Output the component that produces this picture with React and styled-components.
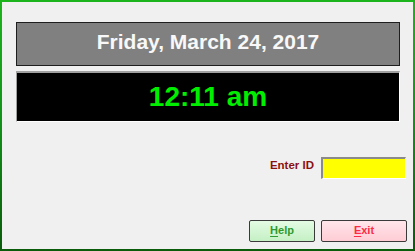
import React from "react";
import styled, { createGlobalStyle } from "styled-components";

const Global = createGlobalStyle`
  html, body {
    margin: 0;
    padding: 0;
    background: #f0f0f0;
  }
  * {
    box-sizing: border-box;
  }
`;

const Frame = styled.div`
  width: 415px;
  height: 251px;
  display: flex;
  flex-direction: column;
  background: #f0f0f0;
  border: 2px solid;
  border-image: linear-gradient(to bottom, #1cb41c, #12901a 50%, #0a5c0a) 1;
  font-family: "Liberation Sans", Arial, sans-serif;
`;

const Clock = styled.div`
  display: flex;
  flex-direction: column;
  gap: 5px;
  padding: 20px 13px 0 14px;
`;

const DatePanel = styled.div`
  height: 44px;
  display: flex;
  align-items: center;
  justify-content: center;
  padding-bottom: 4px;
  background: #808080;
  border: 1px solid #1e1e1e;
  color: #f8f8f8;
  font-weight: bold;
  font-size: 21px;
`;

const TimePanel = styled.div`
  height: 51px;
  display: flex;
  align-items: center;
  justify-content: center;
  background: #000;
  border-top: 2px solid #a0a0a0;
  border-left: 1px solid #a0a0a0;
  border-right: 1px solid #fff;
  border-bottom: 1px solid #fff;
  color: #00ee00;
  font-weight: bold;
  font-size: 28px;
`;

const EntryRow = styled.div`
  display: flex;
  justify-content: flex-end;
  align-items: center;
  gap: 7px;
  margin-top: 35px;
  padding-right: 7px;
`;

const Label = styled.label`
  color: #8b1010;
  font-weight: bold;
  font-size: 11.5px;
  margin-top: -6px;
`;

const IdInput = styled.input`
  width: 85px;
  height: 22px;
  margin: 0;
  padding: 0 3px;
  background: #ffff00;
  border-top: 2px solid #8a8a8a;
  border-left: 2px solid #8a8a8a;
  border-right: 1px solid #fff;
  border-bottom: 1px solid #fff;
  outline: none;
  font-family: inherit;
  font-size: 12px;
`;

const ButtonRow = styled.div`
  display: flex;
  justify-content: flex-end;
  gap: 6px;
  margin-top: auto;
  margin-bottom: 7px;
  padding-right: 6px;
`;

const Button = styled.button`
  width: ${(p) => p.$width}px;
  height: 22px;
  padding: 0 0 2px;
  border: 1px solid #3a3a3a;
  border-radius: 2px;
  background: ${(p) => p.$bg};
  color: ${(p) => p.$color};
  font-family: inherit;
  font-weight: bold;
  font-size: 11px;
  cursor: pointer;

  u {
    text-underline-offset: 2px;
  }
`;

export default function App() {
  return (
    <>
      <Global />
      <Frame>
        <Clock>
          <DatePanel>Friday, March 24, 2017</DatePanel>
          <TimePanel>12:11 am</TimePanel>
        </Clock>
        <EntryRow>
          <Label htmlFor="id">Enter ID</Label>
          <IdInput id="id" />
        </EntryRow>
        <ButtonRow>
          <Button
            $width={66}
            $bg="linear-gradient(to bottom, #e4fbe4, #c4f0c4)"
            $color="#2f9a2f"
          >
            <u>H</u>elp
          </Button>
          <Button
            $width={86}
            $bg="linear-gradient(to bottom, #ffe6ea, #ffccd4)"
            $color="#ff2a44"
          >
            <u>E</u>xit
          </Button>
        </ButtonRow>
      </Frame>
    </>
  );
}
